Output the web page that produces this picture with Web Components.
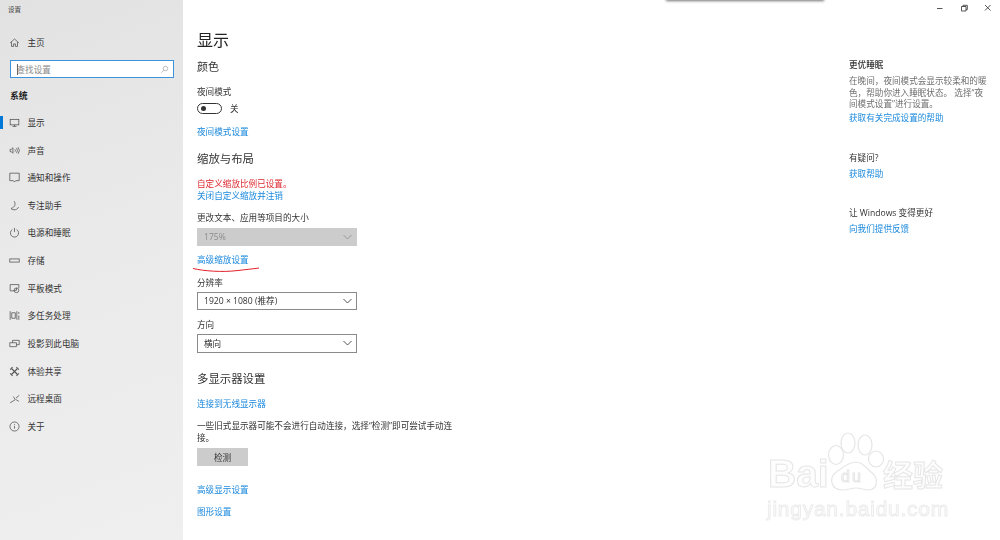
<!DOCTYPE html>
<html lang="zh"><head><meta charset="utf-8"><style>
html,body{margin:0;padding:0;background:#fff}
body{width:1000px;height:540px;overflow:hidden;font-family:"Open Sans","Noto Sans CJK SC",sans-serif;color:#2b2b2b}
</style></head><body>
<x-app></x-app>
<script>
const ICONS={
home:'<path d="M1.500 7.500 7 2.500l5.500 5M3.200 6.300V12h2.600V8.800h2.400V12h2.600V6.300"/>',
display:'<rect x="1.500" y="3" width="11" height="7"/><path d="M7 10v2M4.500 12h5"/>',
sound:'<path d="M1.500 5.500v3h1.500l2 2V3.500l-2 2zM7.500 5.500a2 2 0 0 1 0 3M9.500 4a4.500 4.500 0 0 1 0 6M11.500 2.800a6.500 6.500 0 0 1 0 8.400"/>',
notify:'<path d="M1 1.500h12v9.500H8.500L7 12.800 5.500 11H1z"/>',
moon:'<path d="M6.500 1.500c2.300 3.300 1.500 7.500-4 9.300 2.800 2.800 8.500 2 9.500-1.800"/>',
power:'<path d="M4.300 3.200a5.200 5.200 0 1 0 5.400 0M7 1.200v5.300"/>',
storage:'<rect x="1" y="5" width="12" height="4"/>',
tablet:'<path d="M7 10H1.500V2h11v4.500"/><circle cx="9.500" cy="9.300" r="3"/><path d="M9.500 6.300v3H6.500"/>',
multi:'<path d="M1.500 1.500v11M10 1.500v11M3.500 3.500H8v7H3.500zM12.500 2.500v2.500M12.500 7v5.500"/>',
project:'<path d="M4.500 6V3h8.500v5.500H9.500M1 6h8.500v5H1z"/>',
share:'<path d="M3.500 3.500 10.500 10.500M10.500 3.500 3.500 10.500" stroke-width="1.400"/><path d="M1.500 4.500 4.500 1.500M9.500 1.500 12.500 4.500M1.500 9.500l3 3M9.500 12.500l3-3" stroke-width="1.400"/>',
remote:'<path d="M1.500 12.500 8 8.500 5.500 4.500M8.800 6.500 13 3M9 8.500l3.500 2"/>',
info:'<circle cx="7" cy="7" r="5.800"/><path d="M7 6.300v3.500M7 4v1.200"/>',
search:'<circle cx="8.500" cy="5.500" r="3.500"/><path d="M6 8 2 12"/>'};
function def(name,css,html,extra){
  customElements.define(name,class extends HTMLElement{
    constructor(){super();const r=this.attachShadow({mode:'open'});
      r.innerHTML='<style>'+css+'</style>'+html;}
    connectedCallback(){if(extra)extra(this)}
  });
}
def('x-nav',`:host{display:flex;align-items:center;height:27.640px;font-size:8.600px;color:#333;position:relative}
 svg{width:11px;height:11px;margin-left:8.500px;margin-right:8px;fill:none;stroke:#555;stroke-width:1;flex:none}
 :host([active])::before{content:"";position:absolute;left:0;top:7px;width:2.500px;height:13.500px;background:#0078d7}`,
 '<svg viewBox="0 0 14 14"></svg><slot></slot>',
 el=>{el.shadowRoot.querySelector('svg').innerHTML=ICONS[el.getAttribute('icon')]||''});
def('x-search',`:host{display:flex;align-items:center;justify-content:space-between;box-sizing:border-box;margin:0 9px 0 9.500px;height:18px;border:1px solid #3d94dc;background:#fff;font-size:8.600px;color:#8a8a8a;padding:0 4px 0 6px;position:relative}
 svg{width:9px;height:9px;fill:none;stroke:#999;stroke-width:1}
 i{position:absolute;left:6px;top:2.500px;width:1px;height:11px;background:#666}`,
 '<i></i><slot></slot><svg viewBox="0 0 14 14">'+ICONS.search+'</svg>');
def('x-sidebar',`:host{display:block;width:183px;height:540px;flex:none;background:linear-gradient(160deg,#e2e2e2 0%,#eaeaea 45%,#efefef 100%);position:relative}
 .t{font-size:6.500px;color:#444;height:20px;line-height:20px;padding-left:8px}
 .hd{font-size:8.800px;font-weight:700;color:#222;margin:10px 0 3.500px 10px;line-height:17px}`,
 `<div class="t">设置</div><x-nav icon="home" style="margin-top:8.500px;margin-bottom:4px">主页</x-nav>
 <x-search>查找设置</x-search><div class="hd">系统</div>
 <x-nav icon="display" active>显示</x-nav><x-nav icon="sound">声音</x-nav><x-nav icon="notify">通知和操作</x-nav>
 <x-nav icon="moon">专注助手</x-nav><x-nav icon="power">电源和睡眠</x-nav><x-nav icon="storage">存储</x-nav>
 <x-nav icon="tablet">平板模式</x-nav><x-nav icon="multi">多任务处理</x-nav><x-nav icon="project">投影到此电脑</x-nav>
 <x-nav icon="share">体验共享</x-nav><x-nav icon="remote">远程桌面</x-nav><x-nav icon="info">关于</x-nav>`);
def('x-link',`:host{display:block;font-size:8.600px;line-height:12px;color:#1a88dc}`,'<slot></slot>');
def('x-label',`:host{display:block;font-size:8.600px;line-height:12px;color:#333}`,'<slot></slot>');
def('x-h2',`:host{display:block;font-size:11.400px;line-height:16px;color:#333}`,'<slot></slot>');
def('x-select',`:host{display:flex;align-items:center;justify-content:space-between;box-sizing:border-box;width:160px;height:18.500px;border:1px solid #8a8a8a;background:#fff;font-size:8.600px;color:#333;padding:0 4.500px 0 6px}
 :host([disabled]){background:#ccc;border-color:#ccc;color:#8c8c8c}
 svg{width:9px;height:6px;fill:none;stroke:#555;stroke-width:1}
 :host([disabled]) svg{stroke:#999}`,
 '<slot></slot><svg viewBox="0 0 9 6"><path d="M.5 1 4.500 5 8.500 1"/></svg>');
def('x-toggle',`:host{display:flex;align-items:center;gap:8px;font-size:8.600px;color:#333}
 .t{width:23px;height:9px;border:1.100px solid #333;border-radius:6px;position:relative;box-sizing:content-box}
 .t::after{content:"";position:absolute;left:3px;top:2px;width:5px;height:5px;border-radius:50%;background:#333}`,
 '<div class="t"></div><slot></slot>');
def('x-button',`:host{display:flex;align-items:center;justify-content:center;width:51px;height:18px;background:#ccc;font-size:8.600px;color:#333}`,'<slot></slot>');
def('x-main',`:host{display:block;width:262px;margin-left:14px;position:relative}
 h1{font-weight:400;font-size:16px;line-height:22px;margin:29px 0 0;color:#222}
 .red{color:#dc2a30;font-size:8.600px;line-height:12px}`,
 `<h1>显示</h1>
 <x-h2 style="margin-top:7.500px;font-size:11px">颜色</x-h2>
 <x-label style="margin-top:11px">夜间模式</x-label>
 <x-toggle style="margin-top:5px;height:12px">关</x-toggle>
 <x-link style="margin-top:11px">夜间模式设置</x-link>
 <x-h2 style="margin-top:13.500px">缩放与布局</x-h2>
 <div class="red" style="margin-top:10.500px">自定义缩放比例已设置。</div>
 <x-link style="margin-top:0">关闭自定义缩放并注销</x-link>
 <x-label style="margin-top:10px">更改文本、应用等项目的大小</x-label>
 <x-select disabled style="margin-top:4px">175%</x-select>
 <x-link style="margin-top:7.500px">高级缩放设置</x-link>
 <x-label style="margin-top:11.500px">分辨率</x-label>
 <x-select style="margin-top:2.500px">1920 × 1080 (推荐)</x-select>
 <x-label style="margin-top:9px">方向</x-label>
 <x-select style="margin-top:3px">横向</x-select>
 <x-h2 style="margin-top:18.500px">多显示器设置</x-h2>
 <x-link style="margin-top:10.500px">连接到无线显示器</x-link>
 <x-label style="margin-top:11.500px;line-height:11.500px;width:262px">一些旧式显示器可能不会进行自动连接，选择“检测”即可尝试手动连接。</x-label>
 <x-button style="margin-top:4px">检测</x-button>
 <x-link style="margin-top:17.500px">高级显示设置</x-link>
 <x-link style="margin-top:10.500px">图形设置</x-link>`);
def('x-aside',`:host{display:block;width:140px;position:absolute;left:849px;top:0;font-size:8.600px}
 b{display:block;font-weight:500;color:#333;line-height:12px}
 p{margin:0;color:#6f6f6f;line-height:11.600px}`,
 `<b style="margin-top:59px">更优睡眠</b>
 <p style="margin-top:5px">在晚间，夜间模式会显示较柔和的暖色，帮助你进入睡眠状态。 选择“夜间模式设置”进行设置。</p>
 <x-link style="margin-top:1.500px">获取有关完成设置的帮助</x-link>
 <x-label style="margin-top:27.500px">有疑问?</x-label>
 <x-link style="margin-top:4px">获取帮助</x-link>
 <x-label style="margin-top:27px">让 Windows 变得更好</x-label>
 <x-link style="margin-top:4px">向我们提供反馈</x-link>`);
def('x-winctl',`:host{position:absolute;right:0;top:0;display:flex;height:16px}
 svg{width:24px;height:16px;fill:none;stroke:#444;stroke-width:.9}`,
 `<svg viewBox="0 0 24 16"><path d="M9 8.500h5.500"/></svg>
  <svg viewBox="0 0 24 16"><path d="M9.500 6.500h4.500v4.500H9.500zM11 6.500V5.300h4.300v4.300h-1.300"/></svg>
  <svg viewBox="0 0 24 16"><path d="M9 5l5.500 5.500M14.500 5 9 10.500"/></svg>`);
def('x-watermark',`:host{position:absolute;left:762px;top:430px;width:200px;height:95px;pointer-events:none;font-family:"Liberation Sans",sans-serif}
 span{position:absolute;color:#fdfdfd;-webkit-text-stroke:1px #e6e6e6;white-space:nowrap;line-height:1}
 svg{position:absolute;left:0;top:0;fill:#fff;stroke:#e6e6e6;stroke-width:1.200}`,
 `<svg width="200" height="95" viewBox="0 0 200 95">
 <ellipse cx="74" cy="25" rx="7.500" ry="9.500"/><ellipse cx="86" cy="13" rx="7" ry="10"/><ellipse cx="103" cy="15" rx="7" ry="10"/><ellipse cx="114" cy="29" rx="7.500" ry="8"/>
 <path d="M94 32c7 0 10 6 15 10 7 5 8 17-2 18-5 0-8-2-13-2s-8 2-13 2c-12 0-14-11-8-17 6-4 13-11 21-11z"/></svg>
 <span style="left:6px;top:24px;font-size:39px;font-weight:700">Bai</span>
 <span style="left:79px;top:39px;font-size:16px;letter-spacing:2px">du</span>
 <span style="left:121px;top:28px;font-size:30px;font-family:'Noto Sans CJK SC',sans-serif;font-weight:700;line-height:1">经验</span>
 <span style="left:5px;top:68px;font-size:21px;letter-spacing:.75px;-webkit-text-stroke-color:#ececec">jingyan.baidu.com</span>`);
def('x-underline',`:host{position:absolute;left:192px;top:264px;width:70px;height:10px}
 svg{display:block}`,
 '<svg width="70" height="10" viewBox="0 0 70 10"><path d="M1 4.500C12 7 30 8.500 46 6.500 54 5.500 60 5 67 4" fill="none" stroke="#e0202a" stroke-width="1"/></svg>');
def('x-app',`:host{display:flex;width:1000px;height:540px;position:relative;overflow:hidden;filter:blur(.45px)}
 .pop{position:absolute;left:666px;top:-6px;width:158px;height:6px;background:#eee;box-shadow:0 1px 3px rgba(0,0,0,.55)}`,
 `<x-sidebar></x-sidebar><x-main></x-main><x-aside></x-aside><x-winctl></x-winctl>
  <div class="pop"></div><x-underline></x-underline><x-watermark></x-watermark>`);
</script>
</body></html>
